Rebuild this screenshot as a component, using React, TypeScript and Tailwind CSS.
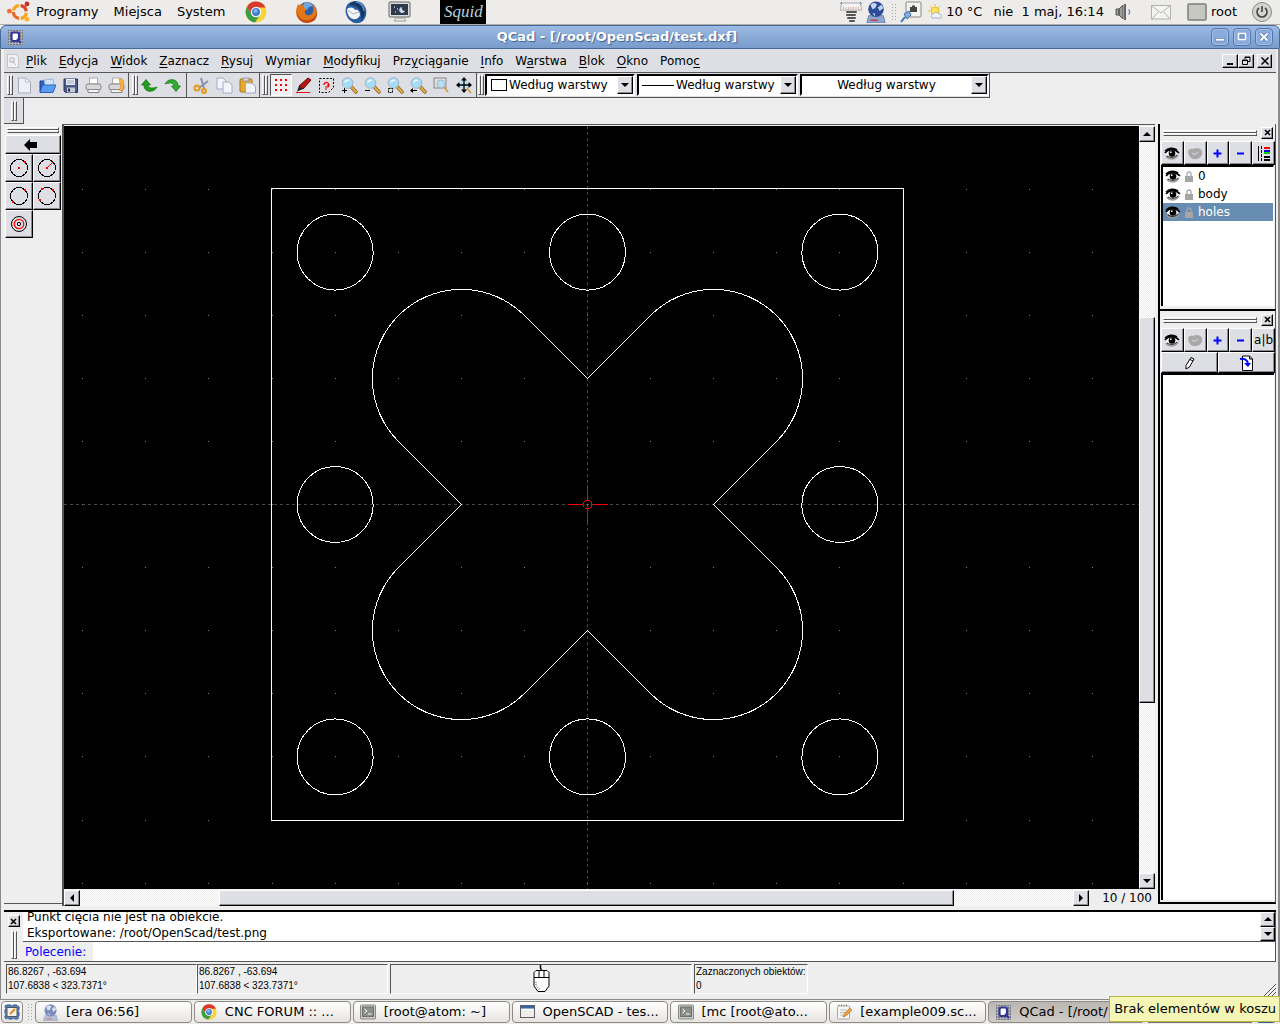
import type { ReactNode } from 'react';

const bevel = 'border border-t-white border-l-white border-r-black border-b-black bg-[#dedfe4] shadow-[inset_-1px_-1px_0_#8a8a90]';

const ubuntuDots = [[25, 3], [3, 12], [25, 22]];

function Grip({ className = '' }: { className?: string }) {
  return (
    <span className={`flex ${className}`}>
      <span className="w-[3px] h-full border border-t-white border-l-white border-r-[#555] border-b-[#555]" />
      <span className="w-[3px] h-full border border-t-white border-l-white border-r-[#555] border-b-[#555]" />
    </span>
  );
}

function HGrip() {
  return (
    <span className="flex-1 flex flex-col">
      <span className="h-[3px] border border-t-white border-l-white border-r-[#555] border-b-[#555]" />
      <span className="h-[3px] border border-t-white border-l-white border-r-[#555] border-b-[#555]" />
    </span>
  );
}

function CloseButton() {
  return (
    <button aria-label="Zamknij" className={`w-3 h-3 shrink-0 flex items-center justify-center ${bevel}`}>
      <svg width="7" height="7" viewBox="0 0 7 7" stroke="#000" strokeWidth="1.6"><path d="M1 1l5 5M6 1L1 6" /></svg>
    </button>
  );
}

function Arrow({ dir }: { dir: 'up' | 'down' | 'left' | 'right' }) {
  const paths = {
    up: 'M0 6h8L4 2z',
    down: 'M0 2h8L4 6z',
    left: 'M6 0v8L2 4z',
    right: 'M2 0v8l4-4z',
  };
  return <svg width="8" height="8" viewBox="0 0 8 8"><path d={paths[dir]} /></svg>;
}

function ScrollButton({ dir, className = 'w-4 h-4' }: { dir: 'up' | 'down' | 'left' | 'right'; className?: string }) {
  return (
    <button aria-label={`Przewiń ${dir}`} className={`shrink-0 flex items-center justify-center ${className} ${bevel}`}>
      <Arrow dir={dir} />
    </button>
  );
}

/* ---------- panel icons ---------- */

function UbuntuLogo() {
  return (
    <svg width="24" height="24" viewBox="0 0 30 26">
      <g fill="none" strokeWidth="4">
        <path d="M8 11a8 8 0 0 1 7-6" stroke="#f5a623" />
        <path d="M17 5a8 8 0 0 1 7 7" stroke="#d9482b" />
        <path d="M24 14a8 8 0 0 1-7 7" stroke="#f5a623" />
        <path d="M15 21a8 8 0 0 1-7-8" stroke="#e8682a" />
      </g>
      {ubuntuDots.map(([x, y], i) => (
        <circle key={i} cx={x} cy={y} r="3" fill={['#c4302b', '#ee7130', '#f7b52c'][i]} />
      ))}
    </svg>
  );
}

function ChromeIcon({ size = 22 }: { size?: number }) {
  return (
    <svg width={size} height={size} viewBox="0 0 22 22">
      <circle cx="11" cy="11" r="10.5" fill="#f8d33a" />
      <path d="M1.900 5.800A10.500 10.500 0 0 1 20.600 6.500H11l-4.500 7z" fill="#d9392c" />
      <path d="M1.900 5.800A10.500 10.500 0 0 0 10 21.400l5-7.400-7.500 1z" fill="#3a9e45" />
      <circle cx="11" cy="11" r="5.200" fill="#fff" />
      <circle cx="11" cy="11" r="4" fill="#3b7fd0" />
      <circle cx="10.500" cy="10" r="2" fill="#86b6ea" />
    </svg>
  );
}

function FirefoxIcon() {
  return (
    <svg width="24" height="24" viewBox="0 0 24 24">
      <circle cx="12" cy="12" r="10" fill="#2d5fa8" />
      <path d="M9 3c4-2 8 0 9 3l-4 1-2 3-4-2z" fill="#6fa8dd" />
      <path d="M3 4c1 1 2 1 3 1 2-1 3-1 4-1-2 1-2 3-1 4l3 1-2 2c-1 3 2 5 5 4 3-1 4-5 3-8l-1-3c3 2 5 5 5 8 0 6-4 10-10 10S1 18 1 12c0-3 1-5 2-8z" fill="#e2761b" />
      <path d="M2 12c1 6 6 9 11 8 5 0 8-4 9-8 1 7-4 11-10 11S1 18 2 12z" fill="#c44a12" />
    </svg>
  );
}

function ThunderbirdIcon() {
  return (
    <svg width="24" height="24" viewBox="0 0 24 24">
      <path d="M3 5C7 0 15 0 19 4c5 5 4 13 0 17-4 3-9 3-12 0C2 18 0 10 3 5z" fill="#2a5d9f" />
      <path d="M5 5c4-5 11-4 14 1 3 5 2 11-2 14 1-5 0-10-4-13-3-2-6-2-8-2z" fill="#16365f" />
      <path d="M12 2c4 0 8 4 8 9" stroke="#5b93d0" strokeWidth="1.500" fill="none" />
      <path d="M3 9c3-2 6-2 8 1 3-1 5 2 5 5-1 3-4 5-7 4-4-1-6-5-6-10z" fill="#f3f5f8" />
      <path d="M4 10l5 4 6-2" stroke="#a9b6c8" fill="none" />
    </svg>
  );
}

function MonitorIcon() {
  return (
    <svg width="24" height="22" viewBox="0 0 24 22">
      <rect x="1" y="1" width="21" height="15" rx="1" fill="#dcdcda" stroke="#666" />
      <rect x="3" y="3" width="17" height="11" fill="#2c3a4e" />
      <path d="M14 6a3 3 0 1 0 3 4 3 3 0 0 1-3-4z" fill="#cdd6e2" />
      <path d="M6 6h1M9 8h1M7 11h1" stroke="#fff" />
      <path d="M8 17h8l2 3H6z" fill="#eee" stroke="#999" />
    </svg>
  );
}

function GlobeIcon({ size = 22, faded = false }: { size?: number; faded?: boolean }) {
  return (
    <svg width={size} height={size} viewBox="0 0 20 24" opacity={faded ? 0.6 : 1}>
      <path d="M2 16h16l2 8H0z" fill="#8da6cf" stroke="#6780ad" />
      <circle cx="10" cy="9" r="8.500" fill="#2c4c95" />
      <path d="M4 4c3-3 6-2 7 0l-2 4-3 1zM12 7l4-3 2 4-4 3zM6 13l3 1v3z" fill="#c6d6f2" />
      <path d="M4 21h8" stroke="#d33" strokeWidth="1.500" />
    </svg>
  );
}

function QcadIcon({ size = 15 }: { size?: number }) {
  return (
    <svg width={size} height={size} viewBox="0 0 15 15">
      <rect width="15" height="15" fill="#777a84" />
      <path d="M0 1.500h15M0 4.500h15M0 7.500h15M0 10.500h15M0 13.500h15M1.500 0v15M4.500 0v15M7.500 0v15M10.500 0v15M13.500 0v15" stroke="#b9bbc2" strokeWidth=".7" />
      <rect x="3.500" y="2.500" width="7.500" height="8.500" rx="2" fill="#fff" stroke="#35359a" strokeWidth="2.200" />
      <path d="M9 9l4 4" stroke="#35359a" strokeWidth="2" />
    </svg>
  );
}

function TerminalIcon() {
  return (
    <svg width="16" height="16" viewBox="0 0 16 16">
      <rect x=".5" y="1" width="15" height="14" rx="1" fill="#c9cbc8" stroke="#888a85" />
      <rect x="2.500" y="3" width="11" height="9.500" fill="#8a8f8a" stroke="#6d706c" />
      <path d="M4.500 5l2.500 2-2.500 2M8 10h3.500" stroke="#fff" fill="none" />
    </svg>
  );
}

function WindowIcon() {
  return (
    <svg width="15" height="14" viewBox="0 0 15 14">
      <rect x=".5" y=".5" width="14" height="12" fill="#eeeeec" stroke="#5c6066" />
      <rect x="1" y="1" width="13" height="2.500" fill="#3465a4" />
      <path d="M2 4.500h11" stroke="#fff" />
    </svg>
  );
}

function NotesIcon() {
  return (
    <svg width="17" height="17" viewBox="0 0 17 17">
      <rect x="1.500" y="2" width="12" height="13" rx="1" fill="#f6f6f4" stroke="#aaa" />
      <path d="M3 2V.5M5.500 2V.5M8 2V.5M10.500 2V.5" stroke="#777" />
      <path d="M4 6h7M4 8.500h6M4 11h3" stroke="#bbb" />
      <path d="M7 13l1-3 6-6 2 2-6 6z" fill="#f0a03c" stroke="#b06a20" strokeWidth=".6" />
    </svg>
  );
}

/* ---------- toolbar icons ---------- */

function Svg16({ children }: { children: ReactNode }) {
  return <svg width="17" height="17" viewBox="0 0 17 17">{children}</svg>;
}

function Lens({ children }: { children?: ReactNode }) {
  return (
    <Svg16>
      <path d="M10.500 10l4.500 5" stroke="#8a6020" strokeWidth="3.400" strokeLinecap="round" />
      <path d="M11 10.500l4 4.500" stroke="#e9a94c" strokeWidth="2" strokeLinecap="round" />
      <circle cx="6.500" cy="6" r="5.300" fill="#a6dcf5" stroke="#9fb6c4" />
      <path d="M3 6a4 4 0 0 1 6-3c-2 1-4 2-6 3z" fill="#e9f8ff" />
      {children}
    </Svg16>
  );
}

const Printer = (
  <>
    <path d="M4.500 1h8v6h-8z" fill="#fff" stroke="#aaa" />
    <rect x="1" y="7" width="15" height="6" rx="2" fill="#d8d8d8" stroke="#888" />
    <path d="M3 12.500h11v3H3z" fill="#f4f4f4" stroke="#888" />
  </>
);

const fileTools = [
  { label: 'Nowy', icon: <Svg16><path d="M2.500 1h7l5 4v11h-12z" fill="#eef0f7" stroke="#a9acb8" /><path d="M9.500 1v4h5z" fill="#fff" stroke="#b9bcc8" /></Svg16> },
  { label: 'Otwórz', icon: <Svg16><path d="M1 4h5l1 2h7v9H1z" fill="#2c62c8" stroke="#1d3f92" /><path d="M5 3l9-1 1 6-9 1z" fill="#cfe4fa" stroke="#7fa4d8" strokeWidth=".7" /><path d="M3.500 8H17l-3 7.500H1z" fill="#5a9df0" stroke="#1f4fae" strokeWidth=".8" /></Svg16> },
  { label: 'Zapisz', icon: <Svg16><path d="M2 2h13.500v13.500H3.500L2 14z" fill="#4b5a86" stroke="#2c3659" /><rect x="4" y="2" width="9" height="6" fill="#e6ebf5" /><path d="M5 4h7M5 6h7" stroke="#9eacc9" /><rect x="5" y="10.500" width="8" height="5" fill="#c3c8d6" /><rect x="6" y="11.500" width="2" height="3" fill="#28304d" /></Svg16> },
  { label: 'Drukuj', icon: <Svg16>{Printer}</Svg16> },
  { label: 'Podgląd wydruku', icon: <Svg16>{Printer}<path d="M11 2h3l2 2-1 4 1 3-3 3-2-1 2-3z" fill="#f7b53c" stroke="#e08a1e" strokeWidth=".7" /></Svg16> },
];

const historyTools = [
  { label: 'Cofnij', icon: <Svg16><path d="M.5 8L5 2.500 9.500 8H7c0 3 4 4 9 2-2 4-6 5-9 4-3-1-4-3-4-6z" fill="#1f9e1f" stroke="#0d6d0d" strokeWidth=".7" /></Svg16> },
  { label: 'Ponów', icon: <Svg16><path d="M16.500 9L12 14.500 7.500 9H10c0-3-3-4-9-2 2-4 6-5 9-4 3 1 4 3 4 6z" fill="#2fae2f" stroke="#0d6d0d" strokeWidth=".7" /></Svg16> },
];

const editTools = [
  { label: 'Wytnij', icon: <Svg16><path d="M8 1l3 10M15 4L6 11" stroke="#8b93a8" strokeWidth="2" /><circle cx="4" cy="11" r="2.500" fill="none" stroke="#e39a1d" strokeWidth="2" /><circle cx="11" cy="14" r="2" fill="none" stroke="#e39a1d" strokeWidth="2" /></Svg16> },
  { label: 'Kopiuj', icon: <Svg16><path d="M1 1h6l3 3v8H1z" fill="#f4f5fb" stroke="#a7a9c4" /><path d="M7 5h6l3 3v8H7z" fill="#f4f5fb" stroke="#a7a9c4" /></Svg16> },
  { label: 'Wklej', icon: <Svg16><rect x="1" y="2" width="12" height="13" rx="1" fill="#e9a92e" stroke="#a8761c" /><rect x="4" y="1" width="6" height="3" fill="#d5d8e2" stroke="#888" strokeWidth=".7" /><path d="M6.500 6h6l4 3v7h-10z" fill="#f1f3fa" stroke="#a4a8bb" /></Svg16> },
];

const viewTools = [
  { label: 'Wersja robocza', icon: <Svg16><path d="M4 9L13 1l3 2-8 9z" fill="#b81414" stroke="#5c0a0a" /><path d="M4 9l4 3-6 2.500z" fill="#222" /><path d="M1 15.500h14" stroke="#e00" /></Svg16> },
  { label: 'Odśwież', icon: <Svg16><path d="M1.500 1.500h14v9l-5 5h-9z" fill="none" stroke="#000" strokeDasharray="2 1.500" /><path d="M6 8a2.500 2.500 0 1 1 4 2M10 7v3H7M7 12h2" fill="none" stroke="#e00" strokeWidth="1.200" /></Svg16> },
  { label: 'Powiększ', icon: <Lens><path d="M1 13.500h5M3.500 11v5" stroke="#000" /></Lens> },
  { label: 'Pomniejsz', icon: <Lens><path d="M1 13.500h5" stroke="#000" /></Lens> },
  { label: 'Autopowiększenie', icon: <Lens><path d="M1.500 11.500h4v4h-4z" fill="none" stroke="#000" strokeDasharray="2 1" /></Lens> },
  { label: 'Poprzedni widok', icon: <Lens><path d="M1 13.500h6" stroke="#000" /><path d="M0 13.500l3-2.500v5z" /></Lens> },
  { label: 'Powiększ okno', icon: <Svg16><rect x="1" y="1" width="12" height="10" fill="none" stroke="#888" /><circle cx="8" cy="7" r="4" fill="#b4e0f5" stroke="#9fb6c4" /><path d="M11 10l4 5" stroke="#d9a050" strokeWidth="2" /></Svg16> },
  { label: 'Przesuń widok', icon: <Svg16><circle cx="8" cy="8" r="4" fill="#b4e0f5" /><path d="M11 11l4 5" stroke="#d9a050" strokeWidth="2" /><path d="M8 2v12M2 8h12" stroke="#000" strokeWidth="1.300" /><path d="M8 0l3 3.500H5zM8 16l3-3.500H5zM0 8l3.500-3v6zM16 8l-3.500-3v6z" /></Svg16> },
];

function Tool({ label, icon }: { label: string; icon: ReactNode }) {
  return (
    <button aria-label={label} title={label} className="w-[23px] h-[23px] shrink-0 flex items-center justify-center">{icon}</button>
  );
}

function Combo({ label, className, center, children }: { label: string; className: string; center?: boolean; children?: ReactNode }) {
  return (
    <div className={`h-[22px] flex items-center bg-white border-2 border-t-black border-l-black border-r-white border-b-white ${className}`}>
      {children}
      <select aria-label={label} className={`flex-1 min-w-0 h-[18px] appearance-none bg-transparent outline-none text-xs leading-[18px] ${center ? 'text-center' : ''}`}>
        <option>Według warstwy</option>
      </select>
      <span className={`w-4 h-[18px] shrink-0 flex items-center justify-center ${bevel}`}><Arrow dir="down" /></span>
    </div>
  );
}

/* ---------- menu ---------- */

const menus = [
  ['', 'P', 'lik'], ['', 'E', 'dycja'], ['', 'W', 'idok'], ['', 'Z', 'aznacz'], ['', 'R', 'ysuj'], ['Wymiar', '', ''],
  ['', 'M', 'odyfikuj'], ['Prz', 'y', 'ciąganie'], ['', 'I', 'nfo'], ['W', 'a', 'rstwa'], ['', 'B', 'lok'], ['', 'O', 'kno'], ['Pomo', 'c', ''],
];

function MenuBar() {
  return (
    <nav className="h-6 flex items-center bg-[#dedfe4] border-b border-[#555] text-xs pl-[3px] pr-1">
      <svg width="12" height="14" viewBox="0 0 12 14" className="mr-px">
        <path d="M.5.5h8l3 3v10H.5z" fill="#f2f2f4" stroke="#c3c4ca" />
        <path d="M3 4h4v4H3zM5 7l4 4" stroke="#b0b2ba" fill="none" />
      </svg>
      {menus.map(([before, key, after]) => (
        <button key={before + key + after} className="px-[6px] h-5 whitespace-nowrap">
          {before}<span className="underline underline-offset-2">{key}</span>{after}
        </button>
      ))}
      <div className="ml-auto flex">
        <button aria-label="Minimalizuj dokument" className={`w-4 h-[14px] flex items-end justify-center ${bevel}`}>
          <span className="w-[6px] h-[2px] mb-[2px] bg-black" />
        </button>
        <button aria-label="Przywróć dokument" className={`w-4 h-[14px] flex items-center justify-center ${bevel}`}>
          <svg width="9" height="9" viewBox="0 0 9 9" fill="none" stroke="#000"><path d="M3 3V1h5v4.500H6M3 1.500h5M.5 4h5v4.500h-5zM.5 4.500h5" /></svg>
        </button>
        <button aria-label="Zamknij dokument" className={`w-[15px] h-[14px] ml-[3px] flex items-center justify-center ${bevel}`}>
          <svg width="8" height="8" viewBox="0 0 8 8" stroke="#000" strokeWidth="1.500"><path d="M.5.5l7 7M7.500.5l-7 7" /></svg>
        </button>
      </div>
    </nav>
  );
}

/* ---------- top panel and title ---------- */

function TopPanel() {
  return (
    <header className="h-[25px] flex items-center bg-[#edeceb] border-b border-[#b0aca6] text-[13px] whitespace-nowrap">
      <div className="w-[31px] flex justify-end"><UbuntuLogo /></div>
      <button className="ml-[5px]">Programy</button>
      <button className="ml-[15px]">Miejsca</button>
      <button className="ml-[15px]">System</button>
      <button aria-label="Chrome" className="ml-5"><ChromeIcon /></button>
      <button aria-label="Firefox" className="ml-7"><FirefoxIcon /></button>
      <button aria-label="Thunderbird" className="ml-[25px]"><ThunderbirdIcon /></button>
      <button aria-label="Pulpit" className="ml-5"><MonitorIcon /></button>
      <div className="ml-7 w-[46px] h-6 bg-black text-center font-['Liberation_Serif',serif] italic text-[#b9d3dc] text-[17px] leading-6">Squid</div>
      <div className="ml-auto flex items-center pr-[7px]">
        <svg width="22" height="22" viewBox="0 0 22 22">
          <path d="M2 2h18l2 7H0z" fill="#f4f4f4" stroke="#aaa" />
          <path d="M3 7h16" stroke="#d55" strokeDasharray="1 1.500" />
          <path d="M0 3l2-2M22 3l-2-2" stroke="#4a7ac0" />
          <path d="M7 11h9M7 14h8M8 17h7M10 20h4" stroke="#555" strokeWidth="2" strokeLinecap="round" />
        </svg>
        <div className="ml-[3px]"><GlobeIcon /></div>
        <span className="ml-1 w-[5px] h-[18px] bg-[radial-gradient(#aaa_1px,transparent_1px)] bg-[size:3px_3px]" />
        <svg width="22" height="22" viewBox="0 0 22 22" className="ml-1">
          <rect x="6" y="1" width="15" height="15" rx="1" fill="#f2f2f0" stroke="#888" />
          <path d="M10 6h2V4.500h3V6h2v5h-7z" fill="#444" />
          <path d="M1 21l4-5" stroke="#3a6fb0" strokeWidth="2" />
          <path d="M4 13l5-3 2 4-4 4z" fill="#89aedb" stroke="#3a6fb0" />
        </svg>
        <svg width="16" height="16" viewBox="0 0 16 16" className="ml-[6px]">
          <circle cx="7" cy="7" r="4" fill="#ffe35a" stroke="#e9b91f" />
          <path d="M7 0v2M0 7h2M2 2l1.500 1.500M12 2l-1.500 1.500" stroke="#e9b91f" />
          <path d="M4 14a2.500 2.500 0 0 1 1-4 3.500 3.500 0 0 1 6 0 2.500 2.500 0 0 1 2 4z" fill="#eef3fa" stroke="#9fb4d0" />
        </svg>
        <span className="ml-[2px]">10 °C</span>
        <span className="ml-[11px] whitespace-pre">nie  1 maj, 16:14</span>
        <svg width="18" height="18" viewBox="0 0 18 18" className="ml-[11px]">
          <path d="M1 6h3v6H1zM4 6l4-4v14l-4-4z" fill="#9c9e9a" stroke="#555" />
          <path d="M10 1v16" stroke="#666" strokeWidth="2" />
          <path d="M13.500 6.500c1.500 1.500 1.500 4 0 5" stroke="#6d8fc4" fill="none" strokeWidth="1.500" />
        </svg>
        <svg width="20" height="15" viewBox="0 0 20 15" className="ml-[18px]" fill="#f4f4f3" stroke="#b1b1ae">
          <rect x=".5" y=".5" width="19" height="13.500" /><path d="M1 1l9 7 9-7M1 14l6-7M19 14l-6-7" />
        </svg>
        <svg width="20" height="18" viewBox="0 0 20 18" className="ml-4"><rect x="1" y="1" width="18" height="16" rx="1" fill="#c4c8c1" stroke="#7b7f78" strokeWidth="1.500" /></svg>
        <span className="ml-[4px]">root</span>
        <svg width="22" height="22" viewBox="0 0 22 22" className="ml-[14px]">
          <circle cx="11" cy="11" r="9.500" fill="#d4d4d1" stroke="#888" />
          <path d="M8 7a5 5 0 1 0 6 0M11 5v6" stroke="#444" strokeWidth="1.600" fill="none" />
        </svg>
      </div>
    </header>
  );
}

function TitleButton({ label, children }: { label: string; children: ReactNode }) {
  return (
    <button aria-label={label} className="w-[18px] h-[18px] rounded-[4px] border border-[#5478ad] bg-[#89aadb] shadow-[inset_0_0_0_1px_#a3bfe6] flex items-center justify-center">
      {children}
    </button>
  );
}

function TitleBar() {
  return (
    <div className="h-6 flex items-center rounded-t-md border border-[#46699c] bg-linear-to-b from-[#9cbae4] to-[#799ccc] pl-[7px] pr-[6px]">
      <QcadIcon />
      <h1 className="flex-1 text-center text-white text-[13px] font-bold [text-shadow:1px_1px_1px_#3d5f92]">QCad - [/root/OpenScad/test.dxf]</h1>
      <div className="flex gap-1">
        <TitleButton label="Minimalizuj"><svg width="10" height="10"><rect x=".5" y="6.500" width="9" height="2.500" fill="#fff" stroke="#5478ad" strokeWidth=".6" /></svg></TitleButton>
        <TitleButton label="Maksymalizuj"><svg width="10" height="10" fill="none"><rect x="1.500" y="1.500" width="7" height="6" stroke="#fff" strokeWidth="1.500" /><rect x="3" y="3" width="4" height="3" stroke="#5478ad" strokeWidth=".7" /></svg></TitleButton>
        <TitleButton label="Zamknij okno"><svg width="10" height="10"><path d="M1.500 1.500l7 7M8.500 1.500l-7 7" stroke="#5478ad" strokeWidth="3.400" /><path d="M1.500 1.500l7 7M8.500 1.500l-7 7" stroke="#fff" strokeWidth="2" /></svg></TitleButton>
      </div>
    </div>
  );
}

function Toolbars() {
  return (
    <>
      <div className="flex">
        <div className="h-[25px] flex items-center bg-[#dedfe4] border-b border-r border-[#555]">
          <Grip className="h-5 ml-[3px]" />
          {fileTools.map((t) => <Tool key={t.label} {...t} />)}
          <span className="w-px h-6 bg-[#555]" />
          <Grip className="h-5 ml-[3px]" />
          {historyTools.map((t) => <Tool key={t.label} {...t} />)}
          <span className="w-px h-6 ml-[2px] mr-[3px] bg-[#555]" />
          {editTools.map((t) => <Tool key={t.label} {...t} />)}
          <span className="w-px h-6 bg-[#555]" />
          <Grip className="h-5 ml-[2px] mr-[2px]" />
          <button aria-label="Siatka" className="w-[22px] h-[22px] border border-t-[#555] border-l-[#555] border-white bg-[#f1f1f3] flex items-center justify-center">
            <svg width="13" height="13" fill="#f00">
              {[0, 5, 10].map((y) => [0, 5, 10].map((x) => <rect key={`${x}-${y}`} x={x} y={y} width="2" height="2" />))}
            </svg>
          </button>
          {viewTools.map((t) => <Tool key={t.label} {...t} />)}
          <span className="w-px h-6 bg-[#555]" />
          <Grip className="h-5 ml-px mr-px" />
          <Combo label="Kolor" className="w-[150px]">
            <span className="w-4 h-3 ml-1 mr-[2px] border border-black" />
          </Combo>
          <Combo label="Szerokość" className="w-[161px] ml-[2px]">
            <span className="w-8 h-px ml-[3px] mr-[2px] bg-black" />
          </Combo>
          <Combo label="Typ linii" className="w-[189px] ml-[2px]" center />
        </div>
      </div>
      <div className="h-[26px] flex">
        <div className="w-5 flex items-center justify-center bg-[#dedfe4] border-r border-b border-[#555]"><Grip className="h-5" /></div>
      </div>
    </>
  );
}

/* ---------- left tool palette ---------- */

const circleTools = [
  { label: 'Środek i punkt', marks: <><rect x="9" y="9" width="2" height="2" fill="red" /><rect x="15" y="3" width="2" height="2" fill="red" /></> },
  { label: 'Środek i promień', marks: <><path d="M10 10l6-6" stroke="red" /><rect x="9" y="9" width="2" height="2" fill="red" /></> },
  { label: 'Dwa punkty', marks: <><rect x="15" y="3" width="2" height="2" fill="red" /><rect x="3" y="15" width="2" height="2" fill="red" /></> },
  { label: 'Trzy punkty', marks: <><rect x="4" y="2" width="2" height="2" fill="red" /><rect x="15" y="3" width="2" height="2" fill="red" /><rect x="2" y="13" width="2" height="2" fill="red" /></> },
];

function Palette() {
  return (
    <aside className="w-[58px] shrink-0 pt-[3px] border-b border-[#555] mb-[6px]">
      <div className="px-[3px] flex"><HGrip /></div>
      <button aria-label="Wstecz" className={`w-14 h-[19px] ml-px mt-[2px] pr-1 flex items-center justify-center ${bevel}`}>
        <svg width="14" height="12" viewBox="0 0 14 12"><path d="M0 6l6-6v3h7v6H6v3z" /></svg>
      </button>
      <div className="grid grid-cols-[28px_28px] ml-px">
        {circleTools.map((t) => (
          <button key={t.label} aria-label={t.label} className={`h-7 flex items-center justify-center ${bevel}`}>
            <svg width="20" height="20" shapeRendering="crispEdges"><circle cx="10" cy="10" r="8.500" fill="none" stroke="#000" />{t.marks}</svg>
          </button>
        ))}
        <button aria-label="Koncentryczny" className={`h-7 flex items-center justify-center ${bevel}`}>
          <svg width="20" height="20" fill="none"><circle cx="10" cy="10" r="7.500" stroke="#000" /><circle cx="10" cy="10" r="4.700" stroke="red" strokeWidth="1.300" /><circle cx="10" cy="10" r="1.700" stroke="#000" /></svg>
        </button>
      </div>
    </aside>
  );
}

/* ---------- drawing ---------- */

const UNIT = 63.1;
const holePos = [-4 * UNIT, 0, 4 * UNIT];
const holes = holePos.flatMap((y) => holePos.map((x) => [x, y])).filter(([x, y]) => x || y);
const gridX = Array.from({ length: 17 }, (_, i) => Math.round((i - 8) * UNIT));
const gridY = Array.from({ length: 12 }, (_, i) => Math.round((i - 5) * UNIT));

function Drawing() {
  return (
    <svg className="block w-full h-full bg-black" shapeRendering="crispEdges">
      <g transform="translate(523 378)">
        <path d="M.5-378V800M-523 .5H900" stroke="#484848" strokeDasharray="3 3" />
        {gridY.map((y) => gridX.map((x) => <rect key={`${x},${y}`} x={x} y={y} width="1" height="1" fill="#7d7d7d" />))}
        <g transform="translate(.5 .5)" fill="none" stroke="#fff">
          <rect x="-316" y="-316" width="632" height="632" />
          {holes.map(([x, y]) => <circle key={`${x},${y}`} cx={x} cy={y} r="38" />)}
          <path d="M0-126L-63-189A89 89 0 0 0-189-63L-126 0-189 63A89 89 0 0 0-63 189L0 126 63 189A89 89 0 0 0 189 63L126 0 189-63A89 89 0 0 0 63-189Z" />
          <path d="M-20 0H-5M5 0H20M0-20V-5M0 5V20" stroke="red" />
          <circle r="4.500" stroke="red" />
        </g>
      </g>
    </svg>
  );
}

const track = 'bg-[repeating-conic-gradient(#fff_0_25%,#ececec_0_50%)] bg-[size:2px_2px]';

function Viewport() {
  return (
    <main className="flex-1 min-w-0 flex flex-col border-l-2 border-t border-[#555] pt-px mb-[4px]">
      <div className="flex-1 min-h-0 flex">
        <div className="flex-1 min-w-0"><Drawing /></div>
        <div className={`w-4 flex flex-col ${track}`}>
          <ScrollButton dir="up" />
          <div className="flex-[176] min-h-0" />
          <div className={`flex-[385] min-h-0 ${bevel}`} />
          <div className="flex-[171] min-h-0" />
          <ScrollButton dir="down" />
        </div>
      </div>
      <div className="h-4 mt-px flex text-xs">
        <div className={`flex-1 flex ${track}`}>
          <ScrollButton dir="left" />
          <div className="flex-[139]" />
          <div className={`flex-[735] ${bevel}`} />
          <div className="flex-[119]" />
          <ScrollButton dir="right" />
        </div>
        <span className="w-[66px] pr-[3px] text-right leading-4">10 / 100</span>
      </div>
    </main>
  );
}

/* ---------- right docks ---------- */

function Eye({ off }: { off?: boolean }) {
  if (off) {
    return (
      <svg width="16" height="13" viewBox="0 0 16 13"><path d="M1 5c0-3 3-4 5-3 3-2 8-1 9 2 1 4-2 8-6 8-4 1-7-2-8-7z" fill="#a9a9a9" /><path d="M5 6c2 2 5 1 6-1" stroke="#e4e4e4" fill="none" /></svg>
    );
  }
  return (
    <svg width="16" height="13" viewBox="0 0 16 13">
      <path d="M2 9c2 4 9 4 12-1" stroke="#999" strokeWidth="1.500" fill="none" />
      <path d="M1 6c3-4 9-4 13 0-3 5-9 5-13 0z" fill="#fff" />
      <path d="M1 6c3-4 9-5 14 0M1 4c3-3 8-4 12-1" stroke="#000" strokeWidth="1.600" fill="none" />
      <circle cx="8" cy="6.500" r="3.300" fill="#000" />
      <path d="M3 9c3 2 7 2 10-1" stroke="#222" fill="none" />
      <rect x="6" y="4.500" width="1.500" height="1.500" fill="#fff" />
    </svg>
  );
}

function Lock() {
  return (
    <svg width="8" height="11" viewBox="0 0 8 11"><path d="M2 5V3a2 2 0 0 1 4 0v2" stroke="#a5a5a5" strokeWidth="1.300" fill="none" /><rect y="5" width="8" height="6" fill="#a5a5a5" /></svg>
  );
}

const plus = <svg width="9" height="9"><path d="M.5 4.500h8M4.500.5v8" stroke="#00f" strokeWidth="2" /></svg>;
const minus = <svg width="9" height="9"><path d="M1 4.500h7" stroke="#00f" strokeWidth="2" /></svg>;

function DockButton({ label, className = '', children }: { label: string; className?: string; children: ReactNode }) {
  return (
    <button aria-label={label} className={`flex-1 flex items-center justify-center ${bevel} ${className}`}>{children}</button>
  );
}

function DockHeader() {
  return (
    <div className="h-[17px] flex items-center gap-1 pl-[2px] pr-[2px]">
      <HGrip />
      <CloseButton />
    </div>
  );
}

const layers = ['0', 'body', 'holes'];

function Docks() {
  return (
    <aside className="w-[118px] shrink-0 ml-[3px] flex flex-col mb-[6px] text-xs">
      <section className="h-[185px] shrink-0 flex flex-col border-l-2 border-black border-r border-r-[#555] pl-px">
        <DockHeader />
        <div className="h-[24px] flex">
          <DockButton label="Pokaż wszystkie warstwy"><Eye /></DockButton>
          <DockButton label="Ukryj wszystkie warstwy"><Eye off /></DockButton>
          <DockButton label="Dodaj warstwę">{plus}</DockButton>
          <DockButton label="Usuń warstwę">{minus}</DockButton>
          <DockButton label="Edytuj warstwę">
            <svg width="14" height="15" shapeRendering="crispEdges"><path d="M1.500 0v15" stroke="#000" /><path d="M4.500 0v15" stroke="#000" strokeDasharray="3 1" /><path d="M7 1.500h6" stroke="red" strokeWidth="2" /><path d="M7 4.500h6" stroke="#00f" strokeWidth="2" /><path d="M7 7h6" stroke="#0c0" strokeWidth="2" /><path d="M7 10.500h6M7 13.500h6" stroke="#000" strokeWidth="2" /></svg>
          </DockButton>
        </div>
        <ul className="flex-1 bg-white border-t-2 border-l-2 border-black border-r border-r-white mr-px mb-[3px]">
          {layers.map((name) => (
            <li key={name} className={`h-[18px] flex items-center pl-[2px] ${name === 'holes' ? 'bg-[#678db2] text-white' : ''}`}>
              <Eye /><span className="ml-1 mr-[5px]"><Lock /></span>{name}
            </li>
          ))}
        </ul>
      </section>
      <section className="flex-1 min-h-0 flex flex-col border-y-2 border-l-2 border-black border-r border-r-[#555] pl-px">
        <DockHeader />
        <div className="h-[24px] flex">
          <DockButton label="Pokaż wszystkie bloki"><Eye /></DockButton>
          <DockButton label="Ukryj wszystkie bloki"><Eye off /></DockButton>
          <DockButton label="Dodaj blok">{plus}</DockButton>
          <DockButton label="Usuń blok">{minus}</DockButton>
          <DockButton label="Zmień nazwę bloku">a|b</DockButton>
        </div>
        <div className="h-[21px] flex">
          <DockButton label="Edytuj blok">
            <svg width="10" height="14" viewBox="0 0 10 14"><path d="M1 13V9.500L6 1.500 9 3 4.500 11z" fill="#fff" stroke="#000" /><path d="M5 3.500L8 5" stroke="#000" /></svg>
          </DockButton>
          <DockButton label="Wstaw blok">
            <svg width="16" height="16" viewBox="0 0 16 16"><path d="M3.500 1h7l3 3v11.500h-10z" fill="#fff" stroke="#000" /><path d="M10.500 1v3h3" fill="none" stroke="#000" /><path d="M1 4c4-1 7 1 8 4" stroke="#00f" strokeWidth="2" fill="none" /><path d="M5 8h7l-3 4z" fill="#00f" /></svg>
          </DockButton>
        </div>
        <ul aria-label="Bloki" className="flex-1 bg-white border-t-2 border-l-2 border-black mr-px mb-[2px]" />
      </section>
    </aside>
  );
}

/* ---------- bottom ---------- */

function CommandLine() {
  return (
    <section className="h-[52px] flex border-t-2 border-black border-b border-b-[#555] text-xs">
      <div className="w-[19px] flex flex-col items-center gap-1 pt-[3px]"><CloseButton /><Grip className="h-[28px]" /></div>
      <div className="flex-1 min-w-0 flex flex-col border-r border-[#555]">
        <div className="h-[30px] flex bg-white border-b border-[#555]">
          <div className="flex-1 pl-1 flex flex-col justify-end overflow-hidden leading-4">
            <p>Punkt cięcia nie jest na obiekcie.</p>
            <p>Eksportowane: /root/OpenScad/test.png</p>
          </div>
          <div className="w-[15px] flex flex-col"><ScrollButton dir="up" className="flex-1" /><ScrollButton dir="down" className="flex-1" /></div>
        </div>
        <div className="flex-1 flex items-center">
          <label htmlFor="command" className="w-[70px] pl-[2px] text-[#00f]">Polecenie:</label>
          <input id="command" className="flex-1 h-full bg-white outline-none px-1" />
        </div>
      </div>
    </section>
  );
}

const cell = 'h-[30px] border border-t-[#555] border-l-[#555] border-r-white border-b-white pl-px whitespace-nowrap';

function StatusBar() {
  return (
    <div className="h-[37px] flex items-start pt-[2px] pl-[2px] font-['Liberation_Sans',Arial,sans-serif] text-[10px] leading-[14px]">
      <div className={`w-[191px] ${cell}`}>86.8267 , -63.694<br />107.6838 &lt; 323.7371°</div>
      <div className={`w-[191px] ${cell}`}>86.8267 , -63.694<br />107.6838 &lt; 323.7371°</div>
      <div className={`w-[302px] ml-[2px] flex justify-center ${cell}`}>
        <svg width="17" height="28" viewBox="0 0 17 28">
          <path d="M7.500 0v3l1 2" stroke="#000" fill="none" strokeWidth="1.500" />
          <path d="M3 5.500h11l2 2V21l-4 5.500H5L1 21V7.500z" fill="#fff" stroke="#000" />
          <path d="M1 12.500h15M6 5.500v7M11 5.500v7" stroke="#000" />
          <path d="M3 17v4l4 4" stroke="#aaa" strokeWidth="2" strokeDasharray="1 1" fill="none" />
        </svg>
      </div>
      <div className={`pr-px ml-[2px] ${cell}`}>Zaznaczonych obiektów:<br />0</div>
      <svg width="13" height="13" className="ml-auto self-end mb-[3px]" stroke="#555"><path d="M1 13L13 1M5 13l8-8M9 13l4-4" /></svg>
    </div>
  );
}

const tasks = [
  { title: '[era 06:56]', icon: <GlobeIcon size={17} faded /> },
  { title: 'CNC FORUM :: ...', icon: <ChromeIcon size={16} /> },
  { title: '[root@atom: ~]', icon: <TerminalIcon /> },
  { title: 'OpenSCAD - tes...', icon: <WindowIcon /> },
  { title: '[mc [root@ato...', icon: <TerminalIcon /> },
  { title: '[example009.sc...', icon: <NotesIcon /> },
  { title: 'QCad - [/root/', icon: <QcadIcon />, active: true },
];

function TaskBar() {
  return (
    <footer className="relative h-[25px] flex items-center bg-[#edeceb] border-t border-[#8f8b84] text-[13px] pl-px">
      <button aria-label="Pokaż pulpit" className="w-[22px] h-[22px] shrink-0 rounded border border-[#8f8b84] bg-linear-to-b from-white to-[#e6e4e1] flex items-center justify-center">
        <svg width="16" height="16" viewBox="0 0 16 16"><rect x="1" y="1" width="14" height="14" rx="2" fill="#5c86bd" stroke="#2d5286" strokeDasharray="4 2" /><rect x="3" y="3.500" width="10" height="9" fill="#f3f2e8" stroke="#555" /><path d="M6 10l5-5" stroke="#e08a1e" strokeWidth="2" /></svg>
      </button>
      <span className="ml-1 mr-[3px] w-[5px] h-[18px] shrink-0 bg-[radial-gradient(#aaa_1px,transparent_1px)] bg-[size:3px_3px]" />
      <div className="flex-1 min-w-0 flex gap-[2px]">
        {tasks.map((t) => (
          <button key={t.title} className={`flex-1 min-w-0 h-[22px] flex items-center rounded border border-[#8f8b84] pl-[6px] whitespace-nowrap overflow-hidden ${t.active ? 'bg-linear-to-b from-[#bab6b1] to-[#cfccc8]' : 'bg-linear-to-b from-white to-[#e6e4e1]'}`}>
            <span className="w-[17px] shrink-0 flex justify-center">{t.icon}</span>
            <span className="ml-[7px]">{t.title}</span>
          </button>
        ))}
      </div>
      <div className="w-[104px] h-[21px] ml-[3px] shrink-0 grid grid-cols-4 gap-px bg-[#e5e3e0] border border-[#77736c]">
        <span className="bg-[#5a82b4]" /><span className="bg-[#b9b4ac]" /><span className="bg-[#b9b4ac]" /><span className="bg-[#b9b4ac]" />
      </div>
      <span className="w-5 h-[21px] mx-1 shrink-0 rounded bg-[#3a5f94]" />
      <div role="tooltip" className="absolute right-0 bottom-[2px] h-[26px] pl-1 pr-[3px] bg-[#f5f5b5] border border-[#b8b44a] leading-6 whitespace-nowrap">Brak elementów w koszu</div>
    </footer>
  );
}

export default function App() {
  return (
    <div className="h-screen flex flex-col overflow-hidden bg-[#eeeeee] text-black font-['DejaVu_Sans',Verdana,sans-serif]">
      <TopPanel />
      <TitleBar />
      <div className="flex-1 min-h-0 flex flex-col border-l border-r-2 border-[#8a8a8a] pl-[3px] pr-[2px]">
        <MenuBar />
        <Toolbars />
        <div className="flex-1 min-h-0 flex">
          <Palette />
          <Viewport />
          <Docks />
        </div>
        <CommandLine />
        <StatusBar />
      </div>
      <TaskBar />
    </div>
  );
}
